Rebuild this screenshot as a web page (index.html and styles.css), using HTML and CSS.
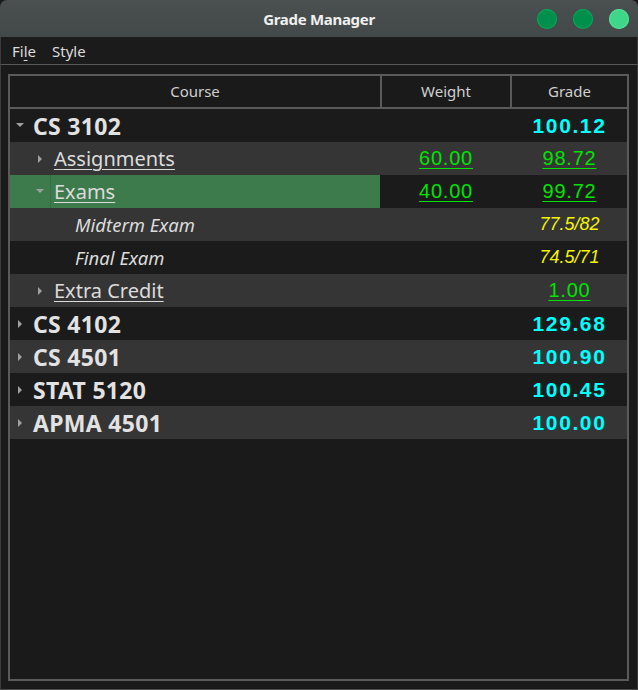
FILE: index.html
```html
<!DOCTYPE html>
<html>
<head>
<meta charset="utf-8">
<link rel="stylesheet" href="styles.css">
</head>
<body>
<div class="window">
  <div class="titlebar">
    <span class="title">Grade Manager</span>
    <div class="controls">
      <span class="dot"></span>
      <span class="dot"></span>
      <span class="dot light"></span>
    </div>
  </div>
  <div class="menubar">
    <span class="menu">Fi<u>l</u>e</span>
    <span class="menu">Style</span>
  </div>
  <div class="content">
    <div class="tree">
      <div class="header">
        <div class="hcell course-h">Course</div>
        <div class="hcell weight-h">Weight</div>
        <div class="hcell grade-h">Grade</div>
      </div>
      <div class="rows">
        <div class="row dark">
          <div class="cell name l0"><span class="twisty"><span class="arrow down"></span></span><span class="course">CS 3102</span></div>
          <div class="cell num"></div>
          <div class="cell num"><span class="cyan">100.12</span></div>
        </div>
        <div class="row light">
          <div class="cell name l1"><span class="twisty"><span class="arrow right"></span></span><span class="cat">Assignments</span></div>
          <div class="cell num"><span class="green">60.00</span></div>
          <div class="cell num"><span class="green">98.72</span></div>
        </div>
        <div class="row dark">
          <div class="cell name l1 selected"><span class="twisty"><span class="arrow down"></span></span><span class="cat">Exams</span></div>
          <div class="cell num"><span class="green">40.00</span></div>
          <div class="cell num"><span class="green">99.72</span></div>
        </div>
        <div class="row light">
          <div class="cell name l2"><span class="item">Midterm Exam</span></div>
          <div class="cell num"></div>
          <div class="cell num"><span class="yellow">77.5/82</span></div>
        </div>
        <div class="row dark">
          <div class="cell name l2"><span class="item">Final Exam</span></div>
          <div class="cell num"></div>
          <div class="cell num"><span class="yellow">74.5/71</span></div>
        </div>
        <div class="row light">
          <div class="cell name l1"><span class="twisty"><span class="arrow right"></span></span><span class="cat">Extra Credit</span></div>
          <div class="cell num"></div>
          <div class="cell num"><span class="green">1.00</span></div>
        </div>
        <div class="row dark">
          <div class="cell name l0"><span class="twisty"><span class="arrow right"></span></span><span class="course">CS 4102</span></div>
          <div class="cell num"></div>
          <div class="cell num"><span class="cyan">129.68</span></div>
        </div>
        <div class="row light">
          <div class="cell name l0"><span class="twisty"><span class="arrow right"></span></span><span class="course">CS 4501</span></div>
          <div class="cell num"></div>
          <div class="cell num"><span class="cyan">100.90</span></div>
        </div>
        <div class="row dark">
          <div class="cell name l0"><span class="twisty"><span class="arrow right"></span></span><span class="course">STAT 5120</span></div>
          <div class="cell num"></div>
          <div class="cell num"><span class="cyan">100.45</span></div>
        </div>
        <div class="row light">
          <div class="cell name l0"><span class="twisty"><span class="arrow right"></span></span><span class="course">APMA 4501</span></div>
          <div class="cell num"></div>
          <div class="cell num"><span class="cyan">100.00</span></div>
        </div>
      </div>
    </div>
  </div>
</div>
</body>
</html>
```

FILE: styles.css
```css
* { box-sizing: border-box; }
html, body {
  margin: 0;
  padding: 0;
  background: #1a1a1a;
}
body {
  font-family: "Noto Sans", sans-serif;
  color: #dcdcdc;
}
.window {
  width: 638px;
  height: 690px;
  display: flex;
  flex-direction: column;
  background: #1a1a1a;
}
.titlebar {
  height: 37px;
  flex: none;
  background: linear-gradient(#4a5050, #434949);
  border-radius: 7px 7px 0 0;
  display: flex;
  align-items: center;
  justify-content: center;
  position: relative;
}
.title {
  font-weight: bold;
  font-size: 15px;
  color: #f0f0f0;
  letter-spacing: -0.3px;
  margin-top: 1px;
}
.controls {
  position: absolute;
  right: 9px;
  top: 9px;
  display: flex;
  gap: 16px;
}
.dot {
  width: 20px;
  height: 20px;
  border-radius: 50%;
  background: #00904c;
  box-shadow: inset 0 0 0 1px #0aa35a;
}
.dot.light {
  background: #40d68a;
  box-shadow: inset 0 0 0 1px #52de96;
}
.menubar {
  height: 28px;
  flex: none;
  background: #1b1b1b;
  border-bottom: 1px solid #585858;
  border-left: 1px solid #3c3c3c;
  border-right: 1px solid #3c3c3c;
  display: flex;
  align-items: center;
  padding-left: 11px;
  gap: 16px;
  font-size: 15px;
  color: #dcdcdc;
}
.menu u {
  text-decoration-thickness: 1px;
  text-underline-offset: 3px;
}
.content {
  flex: 1;
  border-left: 1px solid #3c3c3c;
  border-right: 1px solid #3c3c3c;
  border-bottom: 1px solid #4a4a4a;
  padding: 9px 8px 8px 7px;
  display: flex;
}
.tree {
  flex: 1;
  border: 2px solid #5a5a5a;
  background: #1a1a1a;
  display: flex;
  flex-direction: column;
}
.header {
  display: grid;
  grid-template-columns: 372px 130px 1fr;
  height: 33px;
  border-bottom: 2px solid #5a5a5a;
}
.hcell {
  display: flex;
  align-items: center;
  justify-content: center;
  font-size: 15px;
  color: #cfcfcf;
  padding-bottom: 1px;
}
.course-h, .weight-h {
  border-right: 2px solid #5a5a5a;
}
.rows {
  display: flex;
  flex-direction: column;
}
.row {
  display: grid;
  grid-template-columns: 370px 132px 1fr;
  height: 33px;
}
.row.dark { background: #1b1b1b; }
.row.light { background: #353535; }
.cell {
  display: flex;
  align-items: center;
  height: 33px;
}
.num {
  justify-content: center;
  font-family: "Liberation Sans", Arial, sans-serif;
}
.twisty {
  width: 14px;
  height: 14px;
  flex: none;
  display: flex;
  align-items: center;
  justify-content: center;
}
.name.l0 { padding-left: 3px; }
.name.l0 .twisty { margin-right: 6px; }
.name.l1 { padding-left: 23px; }
.name.l1 .twisty { margin-right: 7px; }
.name.l2 { padding-left: 65px; }
.name.selected {
  background: linear-gradient(to right, #3d7a4c 0, #3d7a4c 40px, #376d44 40px, #376d44 41px, #3d7a4c 41px);
}
.arrow {
  display: block;
  width: 0;
  height: 0;
}
.arrow.right {
  border-top: 4px solid transparent;
  border-bottom: 4px solid transparent;
  border-left: 4px solid #a0a0a0;
}
.arrow.down {
  border-left: 4px solid transparent;
  border-right: 4px solid transparent;
  border-top: 4px solid #a0a0a0;
  margin-top: -1px;
}
.course {
  font-weight: bold;
  font-size: 23px;
  color: #e2e2e2;
  letter-spacing: 0.3px;
}
.cat {
  font-size: 20px;
  color: #dcdcdc;
  text-decoration: underline;
  text-decoration-thickness: 1px;
  text-underline-offset: 3px;
}
.item {
  font-size: 18.5px;
  font-style: italic;
  color: #dcdcdc;
}
.cyan {
  color: #00ffff;
  font-weight: bold;
  font-size: 21px;
  letter-spacing: 1.6px;
}
.green {
  color: #00e400;
  font-size: 20px;
  letter-spacing: 0.8px;
  text-decoration: underline;
  text-decoration-thickness: 1px;
  text-underline-offset: 3px;
}
.yellow {
  color: #f5f500;
  font-style: italic;
  font-size: 18px;
}
```
